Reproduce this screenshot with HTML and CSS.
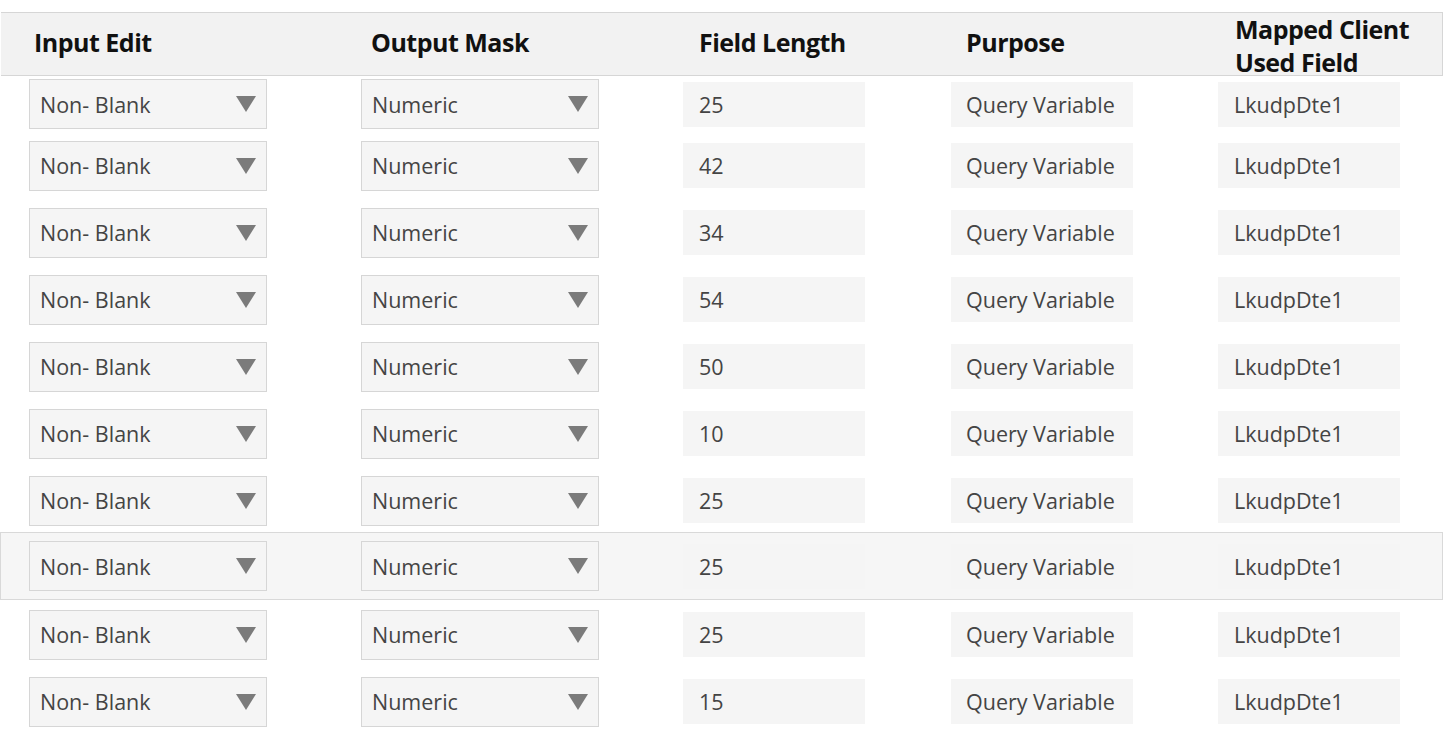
FILE: index.html
```html
<!DOCTYPE html>
<html lang="en">
<head>
    <meta charset="UTF-8">
    <meta name="viewport" content="width=device-width, initial-scale=1.0">
    <title>Field Mapping</title>
    <link rel="stylesheet" href="styles.css">
</head>
<body>
    <div class="mapping-table">
        <div class="head-row">
            <div class="head head-input">Input Edit</div>
            <div class="head head-mask">Output Mask</div>
            <div class="head head-length">Field Length</div>
            <div class="head head-purpose">Purpose</div>
            <div class="head head-mapped">Mapped Client<br>Used Field</div>
        </div>

        <div class="row">
            <div class="select"><span>Non- Blank</span><i class="arrow"></i></div>
            <div class="select"><span>Numeric</span><i class="arrow"></i></div>
            <div class="field field-length">25</div>
            <div class="field">Query Variable</div>
            <div class="field field-mapped">LkudpDte1</div>
        </div>
        <div class="row">
            <div class="select"><span>Non- Blank</span><i class="arrow"></i></div>
            <div class="select"><span>Numeric</span><i class="arrow"></i></div>
            <div class="field field-length">42</div>
            <div class="field">Query Variable</div>
            <div class="field field-mapped">LkudpDte1</div>
        </div>
        <div class="row">
            <div class="select"><span>Non- Blank</span><i class="arrow"></i></div>
            <div class="select"><span>Numeric</span><i class="arrow"></i></div>
            <div class="field field-length">34</div>
            <div class="field">Query Variable</div>
            <div class="field field-mapped">LkudpDte1</div>
        </div>
        <div class="row">
            <div class="select"><span>Non- Blank</span><i class="arrow"></i></div>
            <div class="select"><span>Numeric</span><i class="arrow"></i></div>
            <div class="field field-length">54</div>
            <div class="field">Query Variable</div>
            <div class="field field-mapped">LkudpDte1</div>
        </div>
        <div class="row">
            <div class="select"><span>Non- Blank</span><i class="arrow"></i></div>
            <div class="select"><span>Numeric</span><i class="arrow"></i></div>
            <div class="field field-length">50</div>
            <div class="field">Query Variable</div>
            <div class="field field-mapped">LkudpDte1</div>
        </div>
        <div class="row">
            <div class="select"><span>Non- Blank</span><i class="arrow"></i></div>
            <div class="select"><span>Numeric</span><i class="arrow"></i></div>
            <div class="field field-length">10</div>
            <div class="field">Query Variable</div>
            <div class="field field-mapped">LkudpDte1</div>
        </div>
        <div class="row">
            <div class="select"><span>Non- Blank</span><i class="arrow"></i></div>
            <div class="select"><span>Numeric</span><i class="arrow"></i></div>
            <div class="field field-length">25</div>
            <div class="field">Query Variable</div>
            <div class="field field-mapped">LkudpDte1</div>
        </div>
        <div class="row selected">
            <div class="select"><span>Non- Blank</span><i class="arrow"></i></div>
            <div class="select"><span>Numeric</span><i class="arrow"></i></div>
            <div class="field field-length">25</div>
            <div class="field">Query Variable</div>
            <div class="field field-mapped">LkudpDte1</div>
        </div>
        <div class="row">
            <div class="select"><span>Non- Blank</span><i class="arrow"></i></div>
            <div class="select"><span>Numeric</span><i class="arrow"></i></div>
            <div class="field field-length">25</div>
            <div class="field">Query Variable</div>
            <div class="field field-mapped">LkudpDte1</div>
        </div>
        <div class="row">
            <div class="select"><span>Non- Blank</span><i class="arrow"></i></div>
            <div class="select"><span>Numeric</span><i class="arrow"></i></div>
            <div class="field field-length">15</div>
            <div class="field">Query Variable</div>
            <div class="field field-mapped">LkudpDte1</div>
        </div>
    </div>
</body>
</html>
```

FILE: styles.css
```css
body {
    margin: 0;
    background: white;
    font-family: "Open Sans", "Noto Sans", sans-serif;
    overflow: hidden;
}

.mapping-table {
    margin: 12px 2px 0 1px;
}

.head-row,
.row {
    display: grid;
    grid-template-columns: 332px 322px 268px 267px 1fr;
    align-items: center;
    padding-left: 28px;
}

.head-row {
    height: 62px;
    background: #f2f2f2;
    border: 1px solid #d6d6d6;
    border-left: none;
}

.head {
    font-size: 25px;
    font-weight: bold;
    line-height: 34px;
    color: #111;
    letter-spacing: -0.5px;
    padding-bottom: 15px;
}

.head-input { padding-left: 5px; }
.head-mask { padding-left: 10px; }
.head-length { padding-left: 16px; }
.head-purpose { padding-left: 15px; }
.head-mapped {
    padding-left: 17px;
    padding-bottom: 6px;
    line-height: 33px;
    white-space: nowrap;
}

.row {
    height: 67px;
    font-size: 21.5px;
    color: #444;
}

/* first row sits tighter under the header */
.head-row + .row {
    height: 56px;
}

.row.selected {
    height: 66px;
    background: #f6f6f6;
    border: 1px solid #d9d9d9;
    margin-left: -1px;
    padding-left: 28px;
    margin-top: -2px;
    margin-bottom: 1px;
}

.select {
    width: 216px;
    height: 48px;
    display: flex;
    align-items: center;
    justify-content: space-between;
    padding: 0 10px;
    background: #f5f5f5;
    border: 1px solid #d6d6d6;
}

/* dropdown caret */
.arrow {
    width: 0;
    height: 0;
    border-left: 10.5px solid transparent;
    border-right: 10.5px solid transparent;
    border-top: 16px solid #7b7b7b;
}

.field {
    width: 182px;
    height: 45px;
    box-sizing: border-box;
    display: flex;
    align-items: center;
    padding-left: 15px;
    background: #f5f5f5;
}

.field-length,
.field-mapped {
    padding-left: 16px;
}
```
